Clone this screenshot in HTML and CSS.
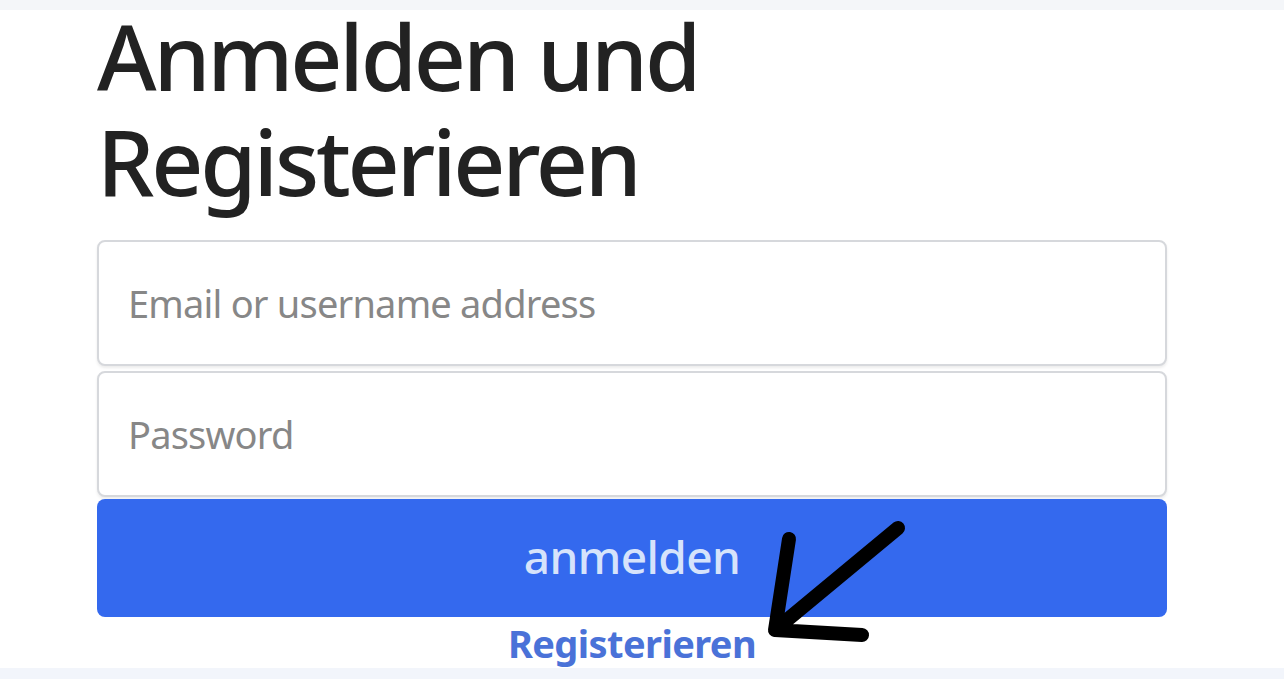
FILE: index.html
```html
<!DOCTYPE html>
<html lang="de">
<head>
<meta charset="utf-8">
<title>Anmelden und Registerieren</title>
<link rel="stylesheet" href="styles.css">
</head>
<body>
<main class="page">
  <h1 class="title">Anmelden und Registerieren</h1>
  <form class="login-form">
    <input class="field" type="text" placeholder="Email or username address">
    <input class="field" type="password" placeholder="Password">
    <button class="submit" type="button">anmelden</button>
    <a class="register-link" href="#">Registerieren</a>
  </form>
  <svg class="annotation-arrow" width="150" height="135" viewBox="0 0 150 135" aria-hidden="true">
    <path d="M133 14 L10 116 M24 25 L10 116 L97 121" fill="none" stroke="#000" stroke-width="14" stroke-linecap="round" stroke-linejoin="round"/>
  </svg>
</main>
<div class="bottom-strip"></div>
</body>
</html>
```

FILE: styles.css
```css
* { box-sizing: border-box; }

html, body {
  margin: 0;
  padding: 0;
  background: #f4f6fa;
  font-family: "Noto Sans", "Open Sans", sans-serif;
}

.page {
  position: relative;
  height: 668px;
  background: linear-gradient(#f4f6f9 0, #f4f6f9 10px, #ffffff 10px);
  padding: 4px 0 0 97px;
}

.title {
  margin: 0;
  width: 700px;
  font-size: 91px;
  line-height: 105px;
  font-weight: 500;
  letter-spacing: -3.2px;
  color: #222222;
}

.login-form {
  display: flex;
  flex-direction: column;
  width: 1070px;
  margin-top: 26px;
}

.field {
  height: 126px;
  border: 2px solid #d6d8dc;
  border-radius: 8px;
  padding: 0 29px;
  font-family: inherit;
  font-size: 38px;
  letter-spacing: -0.8px;
  color: #333;
  background: #fff;
  outline: none;
  box-shadow: 0 2px 3px rgba(0,0,0,0.08);
}

.field + .field {
  margin-top: 5px;
}

.field::placeholder {
  color: #878787;
}

.submit {
  margin-top: 2px;
  height: 118px;
  border: none;
  border-radius: 8px;
  background: #3469ee;
  color: #d6e3fb;
  font-family: inherit;
  font-size: 46px;
  font-weight: 500;
  letter-spacing: -0.6px;
  padding-bottom: 6px;
}

.register-link {
  align-self: center;
  margin-top: 4px;
  font-size: 38px;
  line-height: 44px;
  font-weight: 700;
  letter-spacing: -0.6px;
  color: #4a72d8;
  text-decoration: none;
}

.annotation-arrow {
  position: absolute;
  left: 765px;
  top: 514px;
}

.bottom-strip {
  height: 11px;
  background: #f2f5fb;
}
```
